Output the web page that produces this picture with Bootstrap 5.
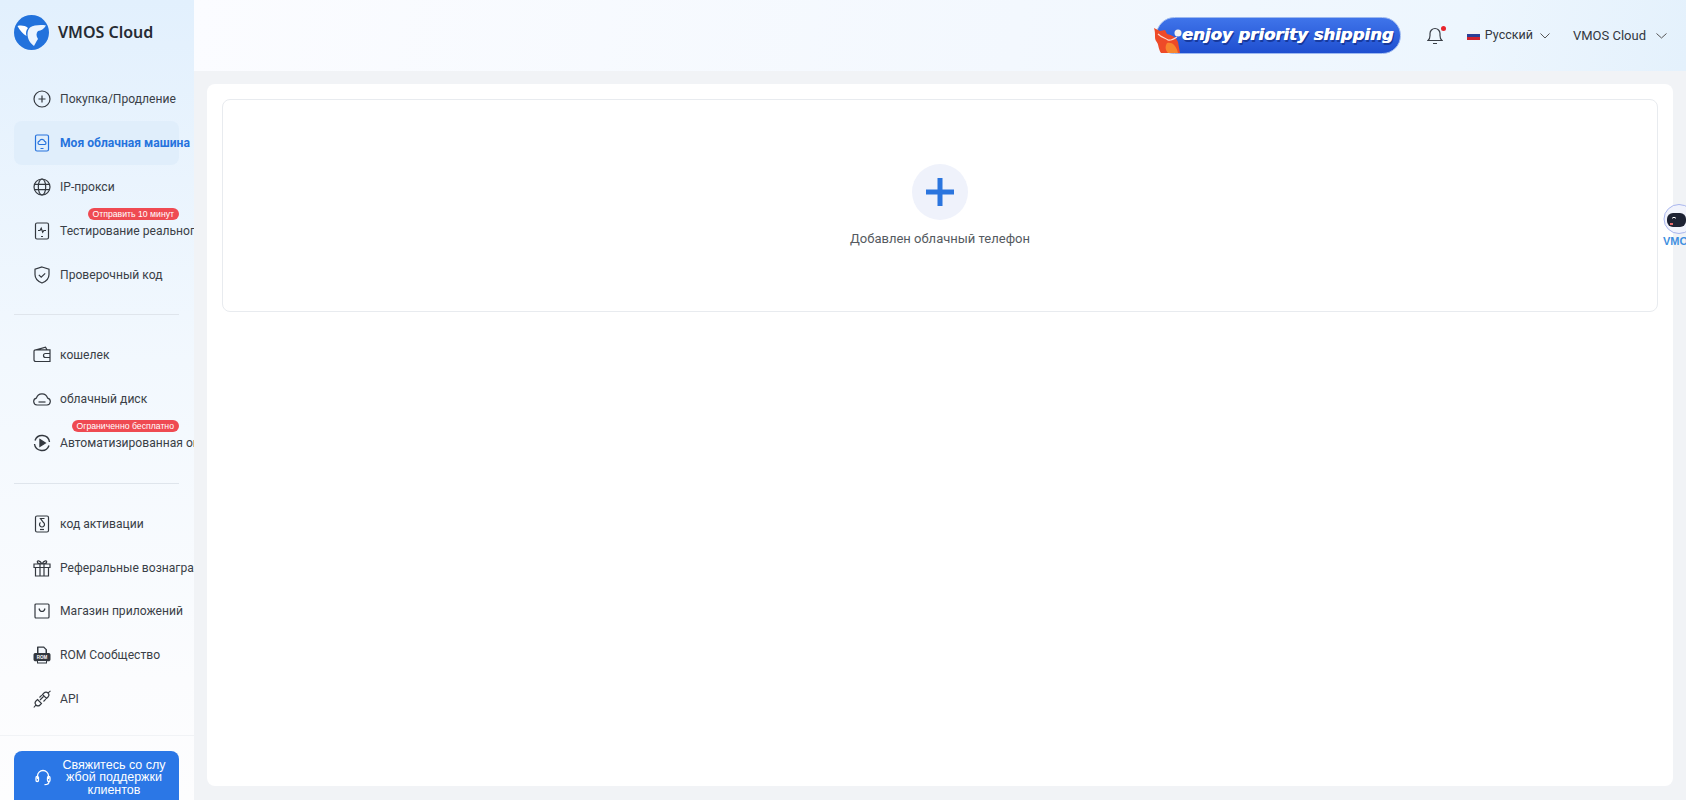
<!DOCTYPE html>
<html lang="ru">

<head>
  <meta charset="UTF-8">
  <meta name="viewport" content="width=device-width, initial-scale=1.0">
  <link href="https://cdn.jsdelivr.net/npm/bootstrap@5.3.2/dist/css/bootstrap.min.css" rel="stylesheet">
  <title>VMOS Cloud</title>
  <style>
    html, body { height: 100%; }
    body {
      font-family: Roboto, "Noto Sans", sans-serif;
      font-size: 13px;
      color: #33383f;
      background: #f1f3f6;
      overflow: hidden;
    }
    .shell { height: 800px; }
    .side-bar {
      width: 194px;
      flex: none;
      overflow: hidden;
      background: linear-gradient(180deg, #e2f0fd 0%, #f2f8fe 45%, #fbfcfe 85%, #fdfdfe 100%);
    }
    .brand-row { height: 64px; flex: none; padding-left: 14px; gap: 9px; }
    .brand-name { font-family: "Noto Sans", sans-serif; font-size: 16px; font-weight: 600; color: #262b33; white-space: nowrap; }
    .menu-wrap { flex: none; padding: 13.5px 14px 0; }
    .menu-row {
      position: relative;
      width: 165px;
      height: 43.8px;
      padding-left: 19px;
      gap: 9px;
      border-radius: 8px;
      font-size: 12.1px;
      white-space: nowrap;
      color: #3a3f47;
      text-decoration: none;
    }
    .menu-row svg { flex: none; width: 18px; height: 18px; }
    .menu-row.is-active { background: #e0eefb; color: #2673dd; font-weight: 700; }
    .menu-flag {
      position: absolute;
      right: 0;
      top: -1px;
      height: 12px;
      line-height: 12px;
      padding: 0 5px 0 4px;
      font-family: "Liberation Sans", sans-serif;
      font-size: 8.7px;
      color: #fff;
      background: #ef4a52;
      border-radius: 6px;
    }
    .menu-line { width: 165px; margin: 18px 0; border-top: 1px solid #dfe5ec; }
    .help-zone { flex: none; border-top: 1px solid #f1f3f6; margin-top: 14px; padding: 15px 14px 0; }
    .help-btn {
      width: 165px;
      height: 64px;
      padding: 8px 0 0 21px;
      gap: 9px;
      background: #2b77e6;
      color: #fff;
      border: 0;
      border-radius: 8px;
      font-family: "Liberation Sans", sans-serif;
      font-size: 12.5px;
      line-height: 12.5px;
      align-items: flex-start;
    }
    .help-btn svg { margin-top: 10px; flex: none; }
    .help-text { width: 108px; text-align: center; }
    .top-strip {
      height: 71px;
      flex: none;
      padding-right: 19px;
      background: linear-gradient(100deg, #fbfcff 0%, #f3f8fe 55%, #edf6fe 85%, #e4f1fc 100%);
    }
    .promo-pill {
      position: relative;
      width: 245px;
      height: 37px;
      margin-right: 26px;
      padding-left: 25px;
      border-radius: 19px;
      background: linear-gradient(180deg, #3f74ea 0%, #1f4fd0 100%);
      border: 1px solid #9cb8f0;
      color: #fff;
      font-family: "DejaVu Sans", sans-serif;
      font-weight: 700;
      font-style: italic;
      font-size: 16.5px;
      line-height: 33px;
      white-space: nowrap;
      text-shadow: .5px 0 0 #fff, 1.5px 1.5px 0 #17399c;
    }
    .promo-gift { position: absolute; left: -4px; top: 9px; }
    .bell-wrap { position: relative; margin-right: 24px; line-height: 0; }
    .bell-dot {
      position: absolute;
      right: -3px;
      top: 0;
      width: 5px;
      height: 5px;
      border-radius: 50%;
      background: #e8242c;
    }
    .ru-flag {
      width: 13px;
      height: 9px;
      margin-right: 5px;
      background: linear-gradient(180deg, #f3f3f6 0 33%, #2b3f96 33% 66%, #d0232e 66%);
    }
    .lang-name { font-size: 12.5px; margin-right: 7px; }
    .lang-box { margin-right: 23px; }
    .acct-name { margin-right: 10px; }
    .page-area { padding: 13px 13px 14px; }
    .white-panel {
      height: 702px;
      padding: 15px;
      background: #fff;
      border-radius: 8px;
    }
    .add-box {
      height: 213px;
      padding-top: 64px;
      border: 1px solid #e8ebef;
      border-radius: 8px;
    }
    .add-round {
      width: 56px;
      height: 56px;
      border-radius: 50%;
      background: #eff2fb;
      margin-bottom: 9px;
    }
    .add-label { color: #555a61; }
    .robot-float { position: absolute; right: 0; top: 204px; line-height: 0; }
  </style>
</head>

<body>
  <div class="shell d-flex">
    <aside class="side-bar d-flex flex-column">
      <div class="brand-row d-flex align-items-center">
        <svg width="35" height="35" viewBox="0 0 35 35">
          <circle cx="17.500" cy="17.500" r="17.500" fill="#2272dc"/>
          <path d="M3.500 11C7 10 11 10.500 14 13 12 15 11.500 18 12.500 21 9 19 5.500 15 3.500 11z" fill="#fff"/>
          <path d="M16 12.500C20 10 27 9.500 32 10.500 30 14 27 15.500 24 16 22 18 22 21 24 24 22 27 21 29 20 31 16 28 13.500 24 13.500 19 13.500 16 14.500 14 16 12.500z" fill="#eaf4ff"/>
        </svg>
        <span class="brand-name">VMOS Cloud</span>
      </div>

      <div class="menu-wrap">
        <a class="menu-row d-flex align-items-center" href="#">
          <svg viewBox="0 0 18 18" fill="none" stroke="#33383f" stroke-width="1.200"><circle cx="9" cy="9" r="8"/><path d="M9 5.500v7M5.500 9h7"/></svg>
          <span>Покупка/Продление</span>
        </a>
        <a class="menu-row is-active d-flex align-items-center" href="#">
          <svg viewBox="0 0 18 18" fill="none" stroke="#2673dd" stroke-width="1.200"><rect x="2.500" y="1" width="13" height="16" rx="1.500"/><path d="M6.200 10.500a1.700 1.700 0 0 1 .2-3.300 2.800 2.800 0 0 1 5.300.2 1.600 1.600 0 0 1 .1 3.100zM7.500 14.500h3"/></svg>
          <span>Моя облачная машина</span>
        </a>
        <a class="menu-row d-flex align-items-center" href="#">
          <svg viewBox="0 0 18 18" fill="none" stroke="#33383f" stroke-width="1.200"><circle cx="9" cy="9" r="8"/><ellipse cx="9" cy="9" rx="3.700" ry="8"/><path d="M1.500 6.300h15M1.500 11.700h15"/></svg>
          <span>IP-прокси</span>
        </a>
        <a class="menu-row d-flex align-items-center" href="#">
          <span class="menu-flag">Отправить 10 минут</span>
          <svg viewBox="0 0 18 18" fill="none" stroke="#33383f" stroke-width="1.200"><rect x="2.500" y="1" width="13" height="16" rx="1.500"/><path d="M5 8.500h2l1.200-2.300 1.500 4 1.200-1.700H13M8 14.500h2"/></svg>
          <span>Тестирование реального устройства</span>
        </a>
        <a class="menu-row d-flex align-items-center" href="#">
          <svg viewBox="0 0 18 18" fill="none" stroke="#33383f" stroke-width="1.200"><path d="M9 1l7 2.200v5.300c0 4-3 7-7 8.500-4-1.500-7-4.500-7-8.500V3.200z"/><path d="M5.800 8.800l2.400 2.400 4-3.800"/></svg>
          <span>Проверочный код</span>
        </a>
        <div class="menu-line"></div>
        <a class="menu-row d-flex align-items-center" href="#">
          <svg viewBox="0 0 18 18" fill="none" stroke="#33383f" stroke-width="1.200"><path d="M1 5.500c0-1 .7-1.700 1.700-1.700h14.300v11.700H2.700c-1 0-1.700-.7-1.700-1.700zM3 3.800l9.500-2.600 1.500 2.600"/><path d="M17 7.500h-4.500a2 2 0 0 0 0 4H17"/></svg>
          <span>кошелек</span>
        </a>
        <a class="menu-row d-flex align-items-center" href="#">
          <svg viewBox="0 0 18 18" fill="none" stroke="#33383f" stroke-width="1.200"><path d="M4 15a3.500 3.500 0 0 1-.6-6.900 5.800 5.800 0 0 1 11.200 0A3.500 3.500 0 0 1 14 15z"/><path d="M5.500 12h7"/></svg>
          <span>облачный диск</span>
        </a>
        <a class="menu-row d-flex align-items-center" href="#">
          <span class="menu-flag">Ограниченно бесплатно</span>
          <svg viewBox="0 0 18 18" fill="none" stroke="#33383f" stroke-width="1.400"><path d="M2 6.500A7.500 7.500 0 0 1 16.500 8M16 11.500A7.500 7.500 0 0 1 1.500 10"/><path d="M7 5.700l5.200 3.300L7 12.300z" fill="#33383f"/></svg>
          <span>Автоматизированная операция</span>
        </a>
        <div class="menu-line"></div>
        <a class="menu-row d-flex align-items-center" href="#">
          <svg viewBox="0 0 18 18" fill="none" stroke="#33383f" stroke-width="1.200"><rect x="2.500" y="1" width="13" height="16" rx="1.500"/><path d="M11.500 3.500H7.500l3 4a2.500 2.500 0 1 1-3 0"/><path d="M7 14.500h4"/></svg>
          <span>код активации</span>
        </a>
        <a class="menu-row d-flex align-items-center" href="#">
          <svg viewBox="0 0 18 18" fill="none" stroke="#33383f" stroke-width="1.200"><path d="M1 5h16v3.500H1zM2.500 8.500V17h13V8.500M7 5v12M11 5v12M9 5C7 1 3.500 1 4.500 3.500 5 5 9 5 9 5zm0 0c2-4 5.500-4 4.500-1.500C13 5 9 5 9 5z"/></svg>
          <span>Реферальные вознаграждения</span>
        </a>
        <a class="menu-row d-flex align-items-center" href="#">
          <svg viewBox="0 0 18 18" fill="none" stroke="#33383f" stroke-width="1.200"><rect x="2" y="2" width="14" height="14" rx="1"/><path d="M6 6.500c.5 2 1.500 3 3 3s2.500-1 3-3"/></svg>
          <span>Магазин приложений</span>
        </a>
        <a class="menu-row d-flex align-items-center" href="#">
          <svg viewBox="0 0 18 18"><path d="M4.500.5h6.500l3 3V7h1.500c1 0 2 .7 2 1.700v4.800c0 1-1 1.800-2 1.800H14V17.500H4v-2.200H2.500c-1 0-2-.8-2-1.800V8.700C.5 7.700 1.500 7 2.500 7H4V1z" fill="#33383f"/><path d="M5.500 1.800h5l2 2V7h-7z" fill="#f4f8fd"/><rect x="5" y="15" width="8" height="1.500" fill="#f4f8fd"/><text x="9" y="13" text-anchor="middle" font-family="Liberation Sans" font-size="4.500" font-weight="700" fill="#fff">ROM</text></svg>
          <span>ROM Сообщество</span>
        </a>
        <a class="menu-row d-flex align-items-center" href="#">
          <svg viewBox="0 0 18 18" fill="none" stroke="#33383f" stroke-width="1.100"><path d="M4.500 9.500l4 4-1.500 1.500a2.800 2.800 0 0 1-4-4zM2.800 15.200L.8 17.500M9.500 4.500l4 4 1.500-1.500a2.800 2.800 0 0 0-4-4zM15.200 2.800L17.500.8M6.500 7.500l2.300-2.300M10.500 11.500l2.300-2.300M7 10l3.500-3.500"/></svg>
          <span>API</span>
        </a>
      </div>

      <div class="help-zone">
        <button class="help-btn d-flex" type="button">
          <svg width="16" height="17" viewBox="0 0 16 17" fill="none" stroke="#fff" stroke-width="1.300"><path d="M2.500 10V7a5.500 5.500 0 0 1 11 0v3"/><rect x="1" y="7.500" width="2.500" height="5" rx="1.200"/><rect x="12.500" y="7.500" width="2.500" height="5" rx="1.200"/><path d="M14 12.500c0 2-2 3.200-4.500 3.200"/></svg>
          <span class="help-text">Свяжитесь со слу<br>жбой поддержки<br>клиентов</span>
        </button>
      </div>
    </aside>

    <div class="flex-grow-1 d-flex flex-column">
      <header class="top-strip d-flex align-items-center justify-content-end">
        <div class="promo-pill">
          <svg class="promo-gift" width="30" height="27" viewBox="0 0 30 27">
            <path d="M1 1l6 3 5-1 2 4c5 1 9 3 11 8l2 11H8C5 22 6 17 3 14 1 11 3 7 1 1z" fill="#ee4a28"/>
            <path d="M14 16c5-1 9 2 11 10H15c-3-3-3-7-1-10z" fill="#f8862e"/>
            <path d="M5 7c3 3 7 4 10 6 3 1 6-1 9-3" fill="none" stroke="#ffd8cc" stroke-width="1.200"/>
            <circle cx="25" cy="6" r="3.500" fill="#f4f2ee"/>
          </svg>
          <span>enjoy priority shipping</span>
        </div>
        <div class="bell-wrap">
          <svg width="16" height="19" viewBox="0 0 16 19" fill="none" stroke="#3a3f47" stroke-width="1.200"><path d="M1 14.500c1.500-1 2-2.500 2-5V7.500a5 5 0 0 1 10 0v2c0 2.500.5 4 2 5zM6 17.500h4"/></svg>
          <span class="bell-dot"></span>
        </div>
        <div class="lang-box d-flex align-items-center">
          <span class="ru-flag"></span>
          <span class="lang-name">Русский</span>
          <svg width="10" height="6" viewBox="0 0 10 6" fill="none" stroke="#555" stroke-width="1"><path d="M.5.500L5 5 9.500.500"/></svg>
        </div>
        <div class="d-flex align-items-center">
          <span class="acct-name">VMOS Cloud</span>
          <svg width="11" height="6" viewBox="0 0 11 6" fill="none" stroke="#555" stroke-width="1"><path d="M.5.500L5.500 5 10.500.500"/></svg>
        </div>
      </header>

      <main class="page-area">
        <div class="white-panel">
          <div class="add-box d-flex flex-column align-items-center">
            <div class="add-round d-flex align-items-center justify-content-center">
              <svg width="28" height="28" viewBox="0 0 28 28"><path d="M14 0v28M0 14h28" stroke="#2b75de" stroke-width="5"/></svg>
            </div>
            <div class="add-label">Добавлен облачный телефон</div>
          </div>
        </div>
      </main>
    </div>
  </div>

  <div class="robot-float">
    <svg width="24" height="48" viewBox="0 0 24 48">
      <ellipse cx="17" cy="15" rx="15" ry="14.500" fill="#f1f3fc" stroke="#a9b6ee" stroke-width="1"/>
      <rect x="5" y="9" width="19" height="14" rx="6" fill="#1d2233"/>
      <path d="M10 14.500c1-1.500 3-1.500 4 0" stroke="#fff" stroke-width="1" fill="none"/>
      <rect x="8" y="19" width="3" height="2" fill="#e76a6a"/>
      <text x="1" y="41" font-family="Liberation Sans" font-size="11" font-weight="700" fill="#3f8fe0">VMO</text>
    </svg>
  </div>

  <script src="https://cdn.jsdelivr.net/npm/bootstrap@5.3.2/dist/js/bootstrap.bundle.min.js"></script>
</body>

</html>
